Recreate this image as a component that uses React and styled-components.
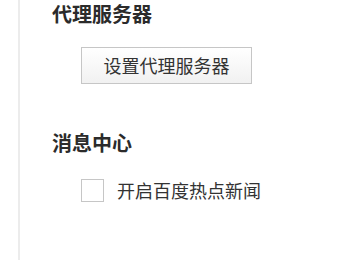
import React from 'react'
import styled, { createGlobalStyle } from 'styled-components'

const GlobalStyle = createGlobalStyle`
  html, body {
    margin: 0;
    padding: 0;
    background: #fff;
  }
  body {
    font-family: "Noto Sans CJK SC", "Noto Sans", sans-serif;
    color: #333;
  }
`

const Page = styled.div`
  display: flex;
  height: 260px;
  padding-left: 18px;
  box-sizing: border-box;
`

const Content = styled.div`
  flex: 1;
  border-left: 2px solid #ececec;
  padding-left: 32px;
  box-sizing: border-box;
`

const Section = styled.section`
  margin-top: ${(p) => p.$top || 0}px;
`

const Title = styled.h2`
  margin: 0;
  font-size: 20px;
  line-height: 28px;
  font-weight: 700;
  color: #2b2b2b;
`

const Body = styled.div`
  padding-left: 29px;
  margin-top: ${(p) => p.$top || 0}px;
`

const Button = styled.button`
  display: block;
  width: 171px;
  height: 37px;
  padding: 0;
  border: 1px solid #c6c6c6;
  border-radius: 0;
  background: linear-gradient(#ffffff, #f1f1f1);
  font-family: inherit;
  font-size: 18px;
  line-height: 35px;
  color: #333;
  cursor: pointer;
`

const CheckRow = styled.label`
  display: flex;
  align-items: center;
  gap: 13px;
  font-size: 18px;
  line-height: 23px;
  color: #333;
`

const Box = styled.span`
  width: 23px;
  height: 23px;
  box-sizing: border-box;
  border: 1px solid #c6c6c6;
  background: #fff;
`

export default function App() {
  return (
    <>
      <GlobalStyle />
      <Page>
        <Content>
          <Section>
            <Title>代理服务器</Title>
            <Body $top={19}>
              <Button>设置代理服务器</Button>
            </Body>
          </Section>
          <Section $top={45}>
            <Title>消息中心</Title>
            <Body $top={22}>
              <CheckRow>
                <Box />
                开启百度热点新闻
              </CheckRow>
            </Body>
          </Section>
        </Content>
      </Page>
    </>
  )
}
